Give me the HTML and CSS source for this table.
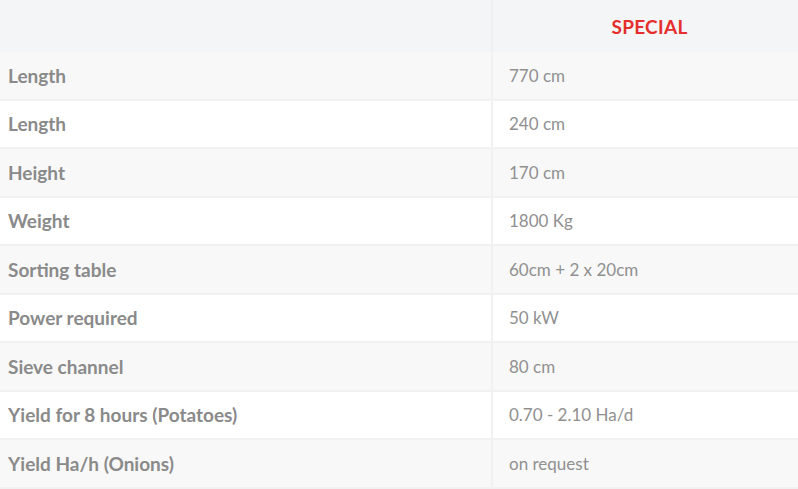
FILE: index.html
```html
<!DOCTYPE html>
<html lang="en">
<head>
<meta charset="utf-8">
<title>Specifications</title>
<link rel="stylesheet" href="styles.css">
</head>
<body>
<table class="spec">
  <thead>
    <tr class="head-row">
      <th class="label-col"></th>
      <th class="model">SPECIAL</th>
    </tr>
  </thead>
  <tbody>
    <tr class="odd"><td class="label">Length</td><td class="value">770 cm</td></tr>
    <tr class="even"><td class="label">Length</td><td class="value">240 cm</td></tr>
    <tr class="odd"><td class="label">Height</td><td class="value">170 cm</td></tr>
    <tr class="even"><td class="label">Weight</td><td class="value">1800 Kg</td></tr>
    <tr class="odd"><td class="label">Sorting table</td><td class="value">60cm + 2 x 20cm</td></tr>
    <tr class="even"><td class="label">Power required</td><td class="value">50 kW</td></tr>
    <tr class="odd"><td class="label">Sieve channel</td><td class="value">80 cm</td></tr>
    <tr class="even"><td class="label">Yield for 8 hours (Potatoes)</td><td class="value">0.70 - 2.10 Ha/d</td></tr>
    <tr class="odd"><td class="label">Yield Ha/h (Onions)</td><td class="value">on request</td></tr>
  </tbody>
</table>
</body>
</html>
```
FILE: styles.css
```css
html, body {
  margin: 0;
  padding: 0;
  background: #ffffff;
}
body {
  font-family: Lato, "Liberation Sans", sans-serif;
  overflow: hidden;
}
.spec {
  width: 798px;
  border-collapse: separate;
  border-spacing: 0;
  table-layout: fixed;
}
.label-col {
  width: 491px;
}
.head-row th {
  background: #f4f5f7;
  height: 52px;
  padding: 0;
}
.head-row .model {
  border-left: 2px solid #eeeff1;
  color: #e52f2d;
  font-size: 19px;
  font-weight: 700;
  text-align: center;
  letter-spacing: 0.3px;
  padding-left: 8px;
  vertical-align: middle;
}
.spec td {
  height: 46.5px;
  padding: 0;
  border-bottom: 2px solid #f1f1f1;
  vertical-align: middle;
  font-size: 17px;
  color: #8c8c8c;
}
.spec .odd td {
  background: #f8f8f8;
}
.spec .even td {
  background: #ffffff;
}
.spec .label {
  font-size: 19px;
  font-weight: 700;
  padding-left: 8px;
  color: #8a8a8a;
}
.spec .value {
  border-left: 2px solid #f1f1f1;
  padding-left: 16px;
  color: #909090;
}
```
